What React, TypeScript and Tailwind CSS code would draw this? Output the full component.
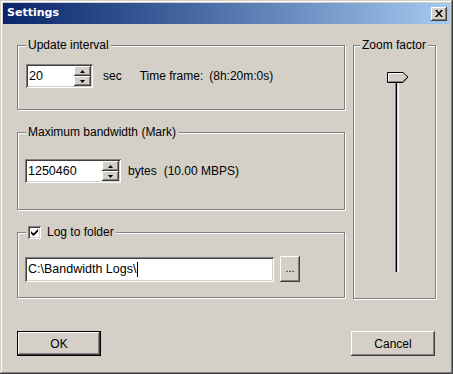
import type { ReactNode } from "react";

const raised =
  "shadow-[inset_-1px_-1px_#404040,inset_1px_1px_#ffffff,inset_-2px_-2px_#808080,inset_2px_2px_#d4d0c8]";
const sunken =
  "shadow-[inset_1px_1px_#808080,inset_-1px_-1px_#ffffff,inset_2px_2px_#404040,inset_-2px_-2px_#d4d0c8]";

function GroupBox({
  label,
  className,
  labelLeft = "left-[8px]",
  children
}: {
  label: ReactNode;
  className: string;
  labelLeft?: string;
  children?: ReactNode;
}) {
  return (
    <div
      className={`relative border border-[#808080] shadow-[inset_1px_1px_#ffffff,1px_1px_#ffffff] ${className}`}
    >
      <div
        className={`absolute top-[-8px] ${labelLeft} flex items-center gap-[6px] bg-[#d4d0c8] px-[2px] leading-[14px]`}
      >
        {label}
      </div>
      {children}
    </div>
  );
}

function SpinButton({ up }: { up?: boolean }) {
  return (
    <div className={`flex h-[10px] w-[17px] items-center justify-center bg-[#d4d0c8] ${raised}`}>
      <svg width="5" height="3" viewBox="0 0 5 3">
        {up ? <path d="M2.5 0 L5 3 L0 3 Z" fill="#000" /> : <path d="M0 0 L5 0 L2.5 3 Z" fill="#000" />}
      </svg>
    </div>
  );
}

function SpinEdit({ value, width }: { value: string; width: string }) {
  return (
    <div className={`flex h-[24px] ${width} items-stretch bg-white p-[2px] ${sunken}`}>
      <div className="flex flex-1 items-center pl-[1px] text-[12.5px] leading-none">{value}</div>
      <div className="flex flex-col">
        <SpinButton up />
        <SpinButton />
      </div>
    </div>
  );
}

function PushButton({ children, isDefault }: { children: ReactNode; isDefault?: boolean }) {
  return (
    <div
      className={`flex h-[25px] w-[84px] items-center justify-center bg-[#d4d0c8] ${isDefault ? "border border-black" : ""}`}
    >
      <div className={`flex h-full w-full items-center justify-center ${raised}`}>{children}</div>
    </div>
  );
}

export default function App() {
  return (
    <div
      className={`flex h-[374px] w-[453px] flex-col bg-[#d4d0c8] p-[3px] text-[12px] text-black shadow-[inset_-1px_-1px_#404040,inset_1px_1px_#d4d0c8,inset_-2px_-2px_#808080,inset_2px_2px_#ffffff]`}
      style={{ fontFamily: '"Liberation Sans", Arial, sans-serif' }}
    >
      {/* title bar */}
      <div className="flex h-[21px] items-center justify-between bg-gradient-to-r from-[#0a246a] to-[#a6caf0] pl-[4px] pr-[3px]">
        <span
          className="text-[11px] font-bold text-white"
          style={{ fontFamily: '"DejaVu Sans", Verdana, sans-serif' }}
        >
          Settings
        </span>
        <div className={`flex h-[14px] w-[16px] items-center justify-center bg-[#d4d0c8] ${raised}`}>
          <svg width="8" height="7" viewBox="0 0 8 7">
            <path d="M0 0 L2 0 L4 2.5 L6 0 L8 0 L5 3.5 L8 7 L6 7 L4 4.5 L2 7 L0 7 L3 3.5 Z" fill="#000" />
          </svg>
        </div>
      </div>

      {/* body */}
      <div className="flex flex-1 flex-col pl-[14px] pt-[21px]">
        <div className="flex gap-[7px]">
          <div className="flex w-[329px] flex-col gap-[22px]">
            <GroupBox label={<span>Update interval</span>} className="h-[65px] w-[328px]">
              <div className="flex items-center pl-[8px] pt-[18px]">
                <SpinEdit value="20" width="w-[67px]" />
                <span className="ml-[10px]">sec</span>
                <span className="ml-[18px]">Time frame:</span>
                <span className="ml-[6px]">(8h:20m:0s)</span>
              </div>
            </GroupBox>

            <GroupBox label={<span>Maximum bandwidth (Mark)</span>} className="h-[78px] w-[328px]">
              <div className="flex items-center pl-[7px] pt-[26px]">
                <SpinEdit value="1250460" width="w-[96px]" />
                <span className="ml-[7px]">bytes</span>
                <span className="ml-[7px]">(10.00 MBPS)</span>
              </div>
            </GroupBox>

            <GroupBox
              labelLeft="left-[8px]"
              label={
                <>
                  <div className={`flex h-[13px] w-[13px] items-center justify-center bg-white ${sunken}`}>
                    <svg width="7" height="7" viewBox="0 0 7 7">
                      <path d="M0 2 L0 4.5 L2.5 7 L7 2.5 L7 0 L2.5 4.5 Z" fill="#000" />
                    </svg>
                  </div>
                  <span>Log to folder</span>
                </>
              }
              className="h-[66px] w-[328px]"
            >
              <div className="flex items-center gap-[6px] pl-[7px] pt-[23px]">
                <div className={`flex h-[25px] w-[249px] items-center bg-white pl-[3px] text-[12.5px] ${sunken}`}>
                  <span>C:\Bandwidth Logs\</span>
                  <span className="ml-[1px] h-[15px] w-[1px] bg-black" />
                </div>
                <div className={`flex h-[26px] w-[20px] items-end justify-center pb-[8px] ${raised}`}>
                  <span className="text-[11px] leading-none">...</span>
                </div>
              </div>
            </GroupBox>
          </div>

          <GroupBox
            labelLeft="left-[6px]"
            label={<span>Zoom factor</span>}
            className="h-[254px] w-[83px]"
          >
            <div className="relative h-full pl-[41px] pt-[30px]">
              <div className="h-[196px] w-[4px] bg-[#d4d0c8] shadow-[inset_1px_0_#808080,inset_2px_0_#000000,inset_-1px_0_#ffffff]" />
              {/* slider thumb */}
              <svg className="absolute left-[33px] top-[26px]" width="22" height="11" viewBox="0 0 22 11">
                <path d="M0.5 0.5 L16 0.5 L21 5 L16 10.5 L0.5 10.5 Z" fill="#d4d0c8" stroke="#000" />
                <path d="M1.5 9.5 L1.5 1.5 L15.5 1.5" fill="none" stroke="#fff" />
                <path d="M1.5 9.5 L15.5 9.5 L19.5 5.5" fill="none" stroke="#808080" />
              </svg>
            </div>
          </GroupBox>
        </div>

        <div className="mt-[32px] flex justify-between pr-[15px]">
          <PushButton isDefault>OK</PushButton>
          <PushButton>Cancel</PushButton>
        </div>
      </div>
    </div>
  );
}
